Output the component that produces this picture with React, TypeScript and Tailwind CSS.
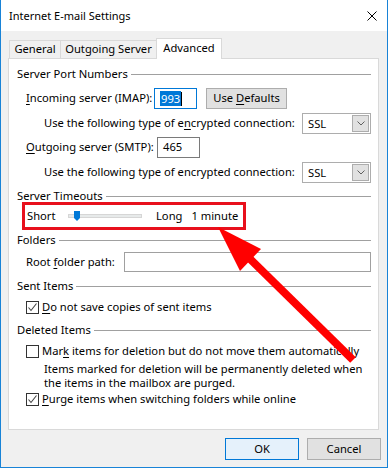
import React from "react";

const FONT = { fontFamily: '"Noto Sans", "Open Sans", sans-serif' };

function GroupHeader({ title, className = "" }: { title: React.ReactNode; className?: string }) {
  return (
    <div className={`flex items-center h-[16px] ${className}`}>
      <span className="whitespace-nowrap pr-[3px]">{title}</span>
      <div className="flex-1 h-px bg-[#a0a0a0]" />
    </div>
  );
}

function Select({ value }: { value: string }) {
  return (
    <div className="flex items-center w-[69px] h-[21px] border border-[#adadad] bg-white p-px">
      <span className="flex-1 pl-[4px] leading-none">{value}</span>
      <div className="w-[17px] h-[17px] bg-[#e1e1e1] border border-[#adadad] flex items-center justify-center">
        <svg width="8" height="5" viewBox="0 0 8 5">
          <path d="M0.5 0.5 L4 4 L7.5 0.5" fill="none" stroke="#606060" strokeWidth="1" />
        </svg>
      </div>
    </div>
  );
}

function Checkbox({ checked }: { checked?: boolean }) {
  return (
    <div className="w-[13px] h-[13px] border border-[#333] bg-white flex items-center justify-center shrink-0">
      {checked && (
        <svg width="11" height="11" viewBox="0 0 11 11">
          <path d="M1.5 5.5 L4 8.5 L9.5 1.5" fill="none" stroke="#444" strokeWidth="1.1" />
        </svg>
      )}
    </div>
  );
}

const U = ({ children }: { children: React.ReactNode }) => <span className="underline underline-offset-2">{children}</span>;

export default function App() {
  return (
    <div className="relative w-[388px] h-[468px] flex flex-col border-x border-b border-[#1883d7] bg-[#f0f0f0] text-[11.2px] text-black overflow-hidden whitespace-nowrap" style={FONT}>
      {/* Title bar */}
      <div className="h-[31px] bg-white flex items-center justify-between pl-[8px] pr-[10px] shrink-0">
        <span className="leading-none text-[11px]">Internet E-mail Settings</span>
        <svg width="10" height="10" viewBox="0 0 10 10">
          <path d="M0.5 0.5 L9.5 9.5 M9.5 0.5 L0.5 9.5" stroke="#000" strokeWidth="1" />
        </svg>
      </div>

      <div className="pl-[7px] pr-[8px] pt-[7px] flex flex-col">
        {/* Tabs */}
        <div className="flex items-end h-[21px] pl-[1px] -mb-px relative z-10">
          <div className="h-[18px] mb-px w-[52px] border border-b-0 border-[#d9d9d9] bg-[#f0f0f0] flex items-center justify-center">General</div>
          <div className="h-[18px] mb-px w-[96px] border border-b-0 border-l-0 border-[#d9d9d9] bg-[#f0f0f0] flex items-center justify-center">Outgoing Server</div>
          <div className="h-[21px] w-[66px] border border-b-0 border-[#d9d9d9] bg-white flex items-center justify-center -ml-px pb-[2px]">Advanced</div>
        </div>

        {/* Panel */}
        <div className="h-[372px] border border-[#d9d9d9] bg-white flex flex-col pl-[8px] pr-[7px]">
          <GroupHeader title="Server Port Numbers" className="mt-[7px]" />

          <div className="flex items-center h-[21px] mt-[6px] pl-[9px]">
            <span className="w-[128px]"><U>I</U>ncoming server (IMAP):</span>
            <div className="w-[43px] h-[21px] border border-[#0078d7] bg-white flex items-center pl-[5px]">
              <span className="bg-[#0078d7] text-white leading-[15px] px-px">993</span>
              <span className="w-px h-[14px] bg-black" />
            </div>
            <div className="ml-[9px] w-[81px] h-[21px] border border-[#adadad] bg-[#e1e1e1] flex items-center justify-center">
              <span>Use <U>D</U>efaults</span>
            </div>
          </div>

          <div className="flex items-center justify-between h-[21px] mt-[4px] pl-[27px]">
            <span>Use the following type of e<U>n</U>crypted connection:</span>
            <Select value="SSL" />
          </div>

          <div className="flex items-center h-[21px] mt-[3px] pl-[9px]">
            <span className="w-[131px]"><U>O</U>utgoing server (SMTP):</span>
            <div className="w-[43px] h-[21px] border border-[#7a7a7a] bg-white flex items-center pl-[5px]">465</div>
          </div>

          <div className="flex items-center justify-between h-[21px] mt-[4px] pl-[27px]">
            <span>Use the following type of encrypted connection:</span>
            <Select value="SSL" />
          </div>

          <GroupHeader title={<>Server <U>T</U>imeouts</>} className="mt-[5px]" />

          <div className="relative flex items-center h-[20px] mt-[2px] pl-[10px]">
            <span className="w-[41px]">Short</span>
            <div className="relative w-[74px] h-[4px] bg-[#e7eaea] border border-[#d6d6d6]">
              <svg className="absolute left-[5px] -top-[4px]" width="6" height="10" viewBox="0 0 6 10">
                <path d="M0 0 H6 V7 L3 10 L0 7 Z" fill="#0078d7" />
              </svg>
            </div>
            <span className="ml-[14px]">Long</span>
            <span className="ml-[9px]">1 minute</span>
            <div className="absolute left-[5px] w-[224px] -top-[4px] -bottom-[4px] border-[3px] border-[#e8101c]" />
          </div>

          <GroupHeader title="Folders" className="mt-[6px]" />

          <div className="flex items-center h-[20px] mt-[4px] pl-[9px]">
            <span className="w-[98px]">Root <U>f</U>older path:</span>
            <div className="flex-1 h-[20px] border border-[#a0a0a0] bg-white" />
          </div>

          <GroupHeader title="Sent Items" className="mt-[6px]" />

          <div className="flex items-center h-[14px] mt-[6px] pl-[9px] gap-[3px]">
            <Checkbox checked />
            <span><U>D</U>o not save copies of sent items</span>
          </div>

          <GroupHeader title="Deleted Items" className="mt-[8px]" />

          <div className="flex items-center h-[14px] mt-[6px] pl-[9px] gap-[3px]">
            <Checkbox />
            <span>Mar<U>k</U> items for deletion but do not move them automatically</span>
          </div>

          <div className="mt-[4px] pl-[27px] leading-[14px]">
            <div>Items marked for deletion will be permanently deleted when</div>
            <div>the items in the mailbox are purged.</div>
          </div>

          <div className="flex items-center h-[14px] mt-[2px] pl-[9px] gap-[3px]">
            <Checkbox checked />
            <span><U>P</U>urge items when switching folders while online</span>
          </div>
        </div>

        {/* Buttons */}
        <div className="flex justify-end gap-[8px] mt-[8px] -mr-[2px]">
          <div className="w-[74px] h-[22px] border border-[#0078d7] bg-[#e5f1fb] flex items-center justify-center">OK</div>
          <div className="w-[74px] h-[22px] border border-[#adadad] bg-[#e1e1e1] flex items-center justify-center">Cancel</div>
        </div>
      </div>

      {/* Annotation arrow */}
      <svg className="absolute left-0 top-0 pointer-events-none" width="388" height="468" viewBox="0 0 388 468">
        <line x1="244" y1="254" x2="352" y2="360" stroke="#ff0000" strokeWidth="8" />
        <polygon points="217,227 260,249 239,271" fill="#ff0000" />
      </svg>
    </div>
  );
}
